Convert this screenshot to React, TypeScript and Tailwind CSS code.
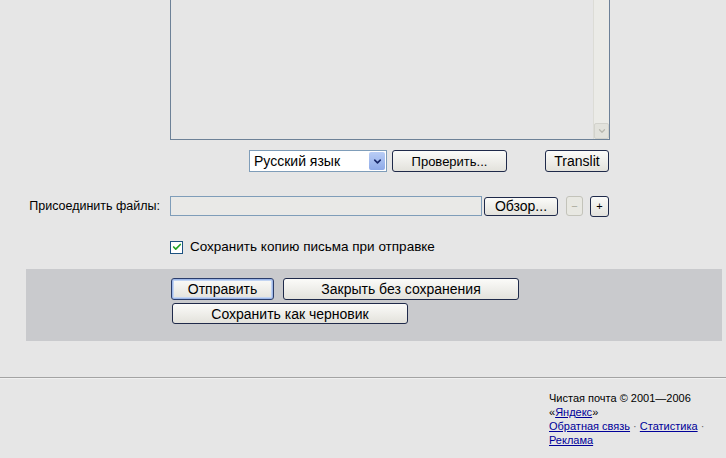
import { Check, ChevronDown } from "lucide-react";

function XpButton({
  label,
  className = "",
  focused = false,
}: {
  label: string;
  className?: string;
  focused?: boolean;
}) {
  return (
    <button
      className={`flex items-center justify-center rounded-[3px] border bg-gradient-to-b from-[#fbfbf9] to-[#e3e2dc] leading-none text-black ${
        focused
          ? "border-[#2b3d6b] shadow-[inset_0_0_0_1px_#9db7e8,inset_0_0_0_2px_#c2d4f2]"
          : "border-[#1f2a4a]"
      } ${className}`}
    >
      {label}
    </button>
  );
}

export default function App() {
  return (
    <div className="w-[726px] h-[458px] overflow-hidden bg-[#e6e6e6] font-['Liberation_Sans',Arial,sans-serif] text-black">
      {/* Message body */}
      <div className="ml-[170px] w-[440px] h-[140px] border-x border-b border-[#6d8197] flex justify-end">
        <div className="w-[16px] h-full border-l border-[#dcdcd6] bg-[#ebebe7] flex flex-col justify-end">
          <div className="h-[16px] bg-[#e2e2dc] border border-[#d2d2cc] rounded-[2px] flex items-center justify-center">
            <ChevronDown className="w-[10px] h-[10px] text-[#b8b8b0]" strokeWidth={3} />
          </div>
        </div>
      </div>

      {/* Language / spellcheck row */}
      <div className="flex items-center mt-[10px] h-[22px]">
        <div className="ml-[249px] w-[138px] h-[22px] bg-white border border-[#7f9db9] flex items-center justify-between">
          <span className="pl-[4px] text-[14px] leading-none">Русский язык</span>
          <div className="w-[16px] h-[18px] mr-[1px] rounded-[2px] bg-gradient-to-b from-[#b9cdf5] to-[#8eaae8] flex items-center justify-center">
            <ChevronDown className="w-[11px] h-[11px] text-[#1a2a6b]" strokeWidth={3.5} />
          </div>
        </div>
        <XpButton label="Проверить..." className="ml-[5px] w-[115px] h-[22px] text-[13px]" />
        <XpButton label="Translit" className="ml-[38px] w-[64px] h-[22px] text-[14px]" />
      </div>

      {/* Attachments */}
      <div className="flex items-center mt-[24px] h-[20px]">
        <span className="w-[160px] text-right text-[12.5px]">Присоединить файлы:</span>
        <div className="ml-[10px] w-[312px] h-[20px] bg-[#e9e9e7] border border-[#7f9db9]" />
        <XpButton label="Обзор..." className="ml-[2px] w-[74px] h-[19px] text-[14px]" />
        <div className="ml-[8px] w-[17px] h-[20px] rounded-[3px] border border-[#c3c3ba] bg-[#e8e8e2] flex items-center justify-center text-[11px] text-[#a8a89c]">
          −
        </div>
        <button className="ml-[7px] w-[19px] h-[21px] rounded-[3px] border border-[#1f2a4a] bg-gradient-to-b from-[#fbfbf9] to-[#e3e2dc] flex items-center justify-center text-[11px]">
          +
        </button>
      </div>

      {/* Save copy */}
      <label className="flex items-center mt-[24px] ml-[170px] h-[14px]">
        <span className="w-[13px] h-[13px] bg-white border border-[#1c5180] flex items-center justify-center">
          <Check className="w-[10px] h-[10px] text-[#21a121]" strokeWidth={4} />
        </span>
        <span className="ml-[7px] text-[13.5px] leading-none">Сохранить копию письма при отправке</span>
      </label>

      {/* Action panel */}
      <div className="mt-[15px] ml-[26px] w-[696px] h-[72px] bg-[#c9cacd] pt-[9px] pl-[145px]">
        <div className="flex">
          <XpButton label="Отправить" focused className="w-[103px] h-[22px] text-[14px]" />
          <XpButton label="Закрыть без сохранения" className="ml-[9px] w-[236px] h-[22px] text-[14px]" />
        </div>
        <XpButton label="Сохранить как черновик" className="mt-[3px] ml-[1px] w-[236px] h-[21px] text-[14px]" />
      </div>

      {/* Footer */}
      <div className="mt-[36px] border-t border-[#a3a3a3] h-[2px] bg-[#f0f0f0]" />
      <div className="ml-[549px] mt-[12px] text-[11px] leading-[14px]">
        <div>Чистая почта © 2001—2006</div>
        <div>
          «<a className="text-[#000099] underline">Яндекс</a>»
        </div>
        <div>
          <a className="text-[#000099] underline">Обратная связь</a>
          <span className="text-[#666]"> · </span>
          <a className="text-[#000099] underline">Статистика</a>
          <span className="text-[#666]"> ·</span>
        </div>
        <div>
          <a className="text-[#000099] underline">Реклама</a>
        </div>
      </div>
    </div>
  );
}
